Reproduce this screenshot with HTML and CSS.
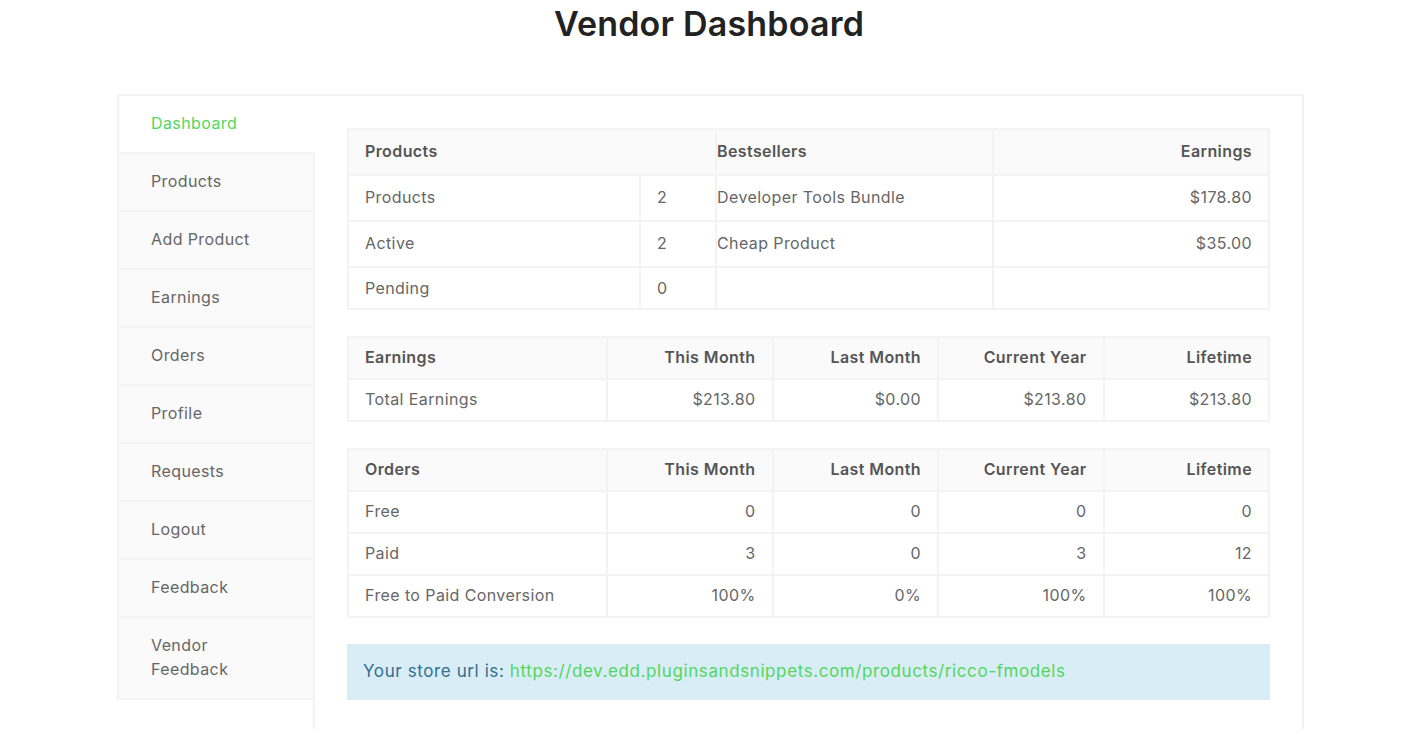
FILE: index.html
```html
<!DOCTYPE html>
<html lang="en">
<head>
    <meta charset="UTF-8">
    <meta name="viewport" content="width=device-width, initial-scale=1.0">
    <title>Vendor Dashboard</title>
    <link rel="stylesheet" href="styles.css">
</head>
<body>

<h1 class="page-title">Vendor Dashboard</h1>

<div class="vendor-wrap">
    <ul class="vendor-nav">
        <li class="active"><a href="#">Dashboard</a></li>
        <li><a href="#">Products</a></li>
        <li><a href="#">Add Product</a></li>
        <li><a href="#">Earnings</a></li>
        <li><a href="#">Orders</a></li>
        <li><a href="#">Profile</a></li>
        <li><a href="#">Requests</a></li>
        <li><a href="#">Logout</a></li>
        <li><a href="#">Feedback</a></li>
        <li><a href="#">Vendor<br>Feedback</a></li>
    </ul>

    <div class="vendor-content">
        <table class="stats products-table">
            <colgroup>
                <col style="width: 292px">
                <col style="width: 76px">
                <col style="width: 277px">
                <col>
            </colgroup>
            <thead>
                <tr>
                    <th colspan="2">Products</th>
                    <th class="flush">Bestsellers</th>
                    <th class="num">Earnings</th>
                </tr>
            </thead>
            <tbody>
                <tr>
                    <td>Products</td>
                    <td>2</td>
                    <td class="flush">Developer Tools Bundle</td>
                    <td class="num">$178.80</td>
                </tr>
                <tr>
                    <td>Active</td>
                    <td>2</td>
                    <td class="flush">Cheap Product</td>
                    <td class="num">$35.00</td>
                </tr>
                <tr class="short">
                    <td>Pending</td>
                    <td>0</td>
                    <td class="flush"></td>
                    <td class="num"></td>
                </tr>
            </tbody>
        </table>

        <table class="stats">
            <colgroup>
                <col style="width: 259px">
                <col><col><col><col>
            </colgroup>
            <thead>
                <tr>
                    <th>Earnings</th>
                    <th class="num">This Month</th>
                    <th class="num">Last Month</th>
                    <th class="num">Current Year</th>
                    <th class="num">Lifetime</th>
                </tr>
            </thead>
            <tbody>
                <tr>
                    <td>Total Earnings</td>
                    <td class="num">$213.80</td>
                    <td class="num">$0.00</td>
                    <td class="num">$213.80</td>
                    <td class="num">$213.80</td>
                </tr>
            </tbody>
        </table>

        <table class="stats">
            <colgroup>
                <col style="width: 259px">
                <col><col><col><col>
            </colgroup>
            <thead>
                <tr>
                    <th>Orders</th>
                    <th class="num">This Month</th>
                    <th class="num">Last Month</th>
                    <th class="num">Current Year</th>
                    <th class="num">Lifetime</th>
                </tr>
            </thead>
            <tbody>
                <tr>
                    <td>Free</td>
                    <td class="num">0</td>
                    <td class="num">0</td>
                    <td class="num">0</td>
                    <td class="num">0</td>
                </tr>
                <tr>
                    <td>Paid</td>
                    <td class="num">3</td>
                    <td class="num">0</td>
                    <td class="num">3</td>
                    <td class="num">12</td>
                </tr>
                <tr>
                    <td>Free to Paid Conversion</td>
                    <td class="num">100%</td>
                    <td class="num">0%</td>
                    <td class="num">100%</td>
                    <td class="num">100%</td>
                </tr>
            </tbody>
        </table>

        <div class="store-url">
            Your store url is: <a href="#">https://dev.edd.pluginsandsnippets.com/products/ricco-fmodels</a>
        </div>
    </div>
</div>

</body>
</html>
```

FILE: styles.css
```css
body {
    font-family: Inter, "Open Sans", sans-serif;
    font-size: 16px;
    letter-spacing: 0.4px;
    color: #666;
    margin: 0;
    padding: 0;
    background-color: #fff;
}
a {
    text-decoration: none;
}
.page-title {
    margin: 0;
    padding-top: 4px;
    height: 90px;
    text-align: center;
    font-size: 34px;
    font-weight: 600;
    letter-spacing: 0.2px;
    line-height: 40px;
    color: #222;
}
.vendor-wrap {
    display: flex;
    width: 1185px;
    margin-left: 117px;
    border-top: 2px solid #f3f3f3;
    border-right: 2px solid #f3f3f3;
    min-height: 700px;
}
.vendor-nav {
    list-style: none;
    margin: 0;
    padding: 0;
    width: 196px;
    border-right: 2px solid #f3f3f3;
    align-self: stretch;
}
.vendor-nav li {
    background-color: #fafafa;
    border-left: 2px solid #f3f3f3;
    border-bottom: 2px solid #f3f3f3;
}
.vendor-nav li.active {
    background-color: #fff;
    margin-right: -2px;
    position: relative;
}
.vendor-nav a {
    display: block;
    padding: 15px 32px 17px;
    line-height: 24px;
    color: #666;
}
.vendor-nav li.active a {
    color: #52d65f;
}
.vendor-content {
    flex: 1;
    padding: 32px 32px 0 32px;
}
.stats {
    width: 100%;
    table-layout: fixed;
    border-collapse: collapse;
    border: 2px solid #f3f3f3;
    margin-bottom: 26px;
}
.stats th,
.stats td {
    border: 2px solid #f3f3f3;
    padding: 7px 16px 9px;
    line-height: 24px;
    text-align: left;
    white-space: nowrap;
}
.stats th {
    background-color: #fafafa;
    font-weight: 600;
    color: #555;
}
.stats .num {
    text-align: right;
}
.stats .flush {
    padding-left: 0;
}
.products-table th,
.products-table td {
    padding-top: 9px;
    padding-bottom: 11px;
}
.products-table tr.short td {
    padding-top: 8px;
    padding-bottom: 8px;
}
.store-url {
    background-color: #d9edf7;
    color: #31708f;
    padding: 15px 16px 16px;
    line-height: 25px;
    font-size: 17px;
    letter-spacing: 0.6px;
}
.store-url a {
    color: #52d65f;
}
```
